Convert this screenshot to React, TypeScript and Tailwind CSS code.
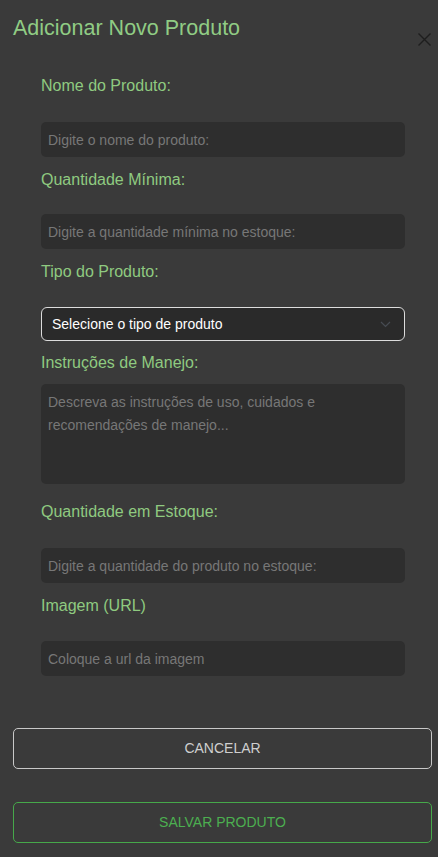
const labelCls = 'block text-[16px] leading-6 text-[#8fca80]'
const inputCls =
  'block w-full h-[35px] rounded-[5px] bg-[#2e2e2e] pl-[7px] text-[14px] text-white placeholder:text-[#777] outline-none'

export default function App() {
  return (
    <div className="min-h-screen w-full bg-[#3a3a3a] [font-family:'Liberation_Sans',Arial,sans-serif]">
      {/* header */}
      <div className="flex h-10 items-start justify-between pt-4 pl-[13px] pr-[7px]">
        <h2 className="text-[21.5px] leading-6 text-[#90cc84]">Adicionar Novo Produto</h2>
        <button className="mt-[17px] block h-[13px] w-[13px] text-[#1e1e1e]" aria-label="Fechar">
          <svg className="block" width="13" height="13" viewBox="0 0 13 13" fill="none" stroke="currentColor" strokeWidth="1.4">
            <path d="M0.5 0.5L12.5 12.5M12.5 0.5L0.5 12.5" />
          </svg>
        </button>
      </div>

      <form className="mt-[34px] pl-[41px] pr-[33px]">
        <label className={labelCls}>Nome do Produto:</label>
        <input className={`${inputCls} mt-6`} placeholder="Digite o nome do produto:" />

        <label className={`${labelCls} mt-[11px]`}>Quantidade Mínima:</label>
        <input className={`${inputCls} mt-[22px]`} placeholder="Digite a quantidade mínima no estoque:" />

        <label className={`${labelCls} mt-[11px]`}>Tipo do Produto:</label>
        <div className="mt-[23px] flex h-[34px] items-center justify-between rounded-[6px] border border-[#dcdcdc] bg-[#2a2a2a] pl-[10px] pr-[13px]">
          <span className="text-[14px] text-white">Selecione o tipo de produto</span>
          <svg className="block" width="11" height="7" viewBox="0 0 11 7" fill="none" stroke="#474c53" strokeWidth="1.2">
            <path d="M1 1L5.5 5.5L10 1" />
          </svg>
        </div>

        <label className={`${labelCls} mt-[10px]`}>Instruções de Manejo:</label>
        <textarea
          className="mt-[9px] block h-[100px] w-full resize-none rounded-[5px] bg-[#2e2e2e] px-[7px] pt-[7px] text-[14px] leading-[23px] text-white placeholder:text-[#777] outline-none"
          placeholder="Descreva as instruções de uso, cuidados e recomendações de manejo..."
        />

        <label className={`${labelCls} mt-4`}>Quantidade em Estoque:</label>
        <input className={`${inputCls} mt-6`} placeholder="Digite a quantidade do produto no estoque:" />

        <label className={`${labelCls} mt-[11px]`}>Imagem (URL)</label>
        <input className={`${inputCls} mt-[23px]`} placeholder="Coloque a url da imagem" />
      </form>

      <div className="mt-[52px] flex flex-col gap-[33px] pl-[13px] pr-[6px]">
        <button className="h-[41px] w-full rounded-[5px] border border-[#c8c8c8] text-[14px] text-[#cfcfcf]">
          CANCELAR
        </button>
        <button className="h-[41px] w-full rounded-[5px] border border-[#46a84a] text-[14px] text-[#4caf50]">
          SALVAR PRODUTO
        </button>
      </div>
    </div>
  )
}
